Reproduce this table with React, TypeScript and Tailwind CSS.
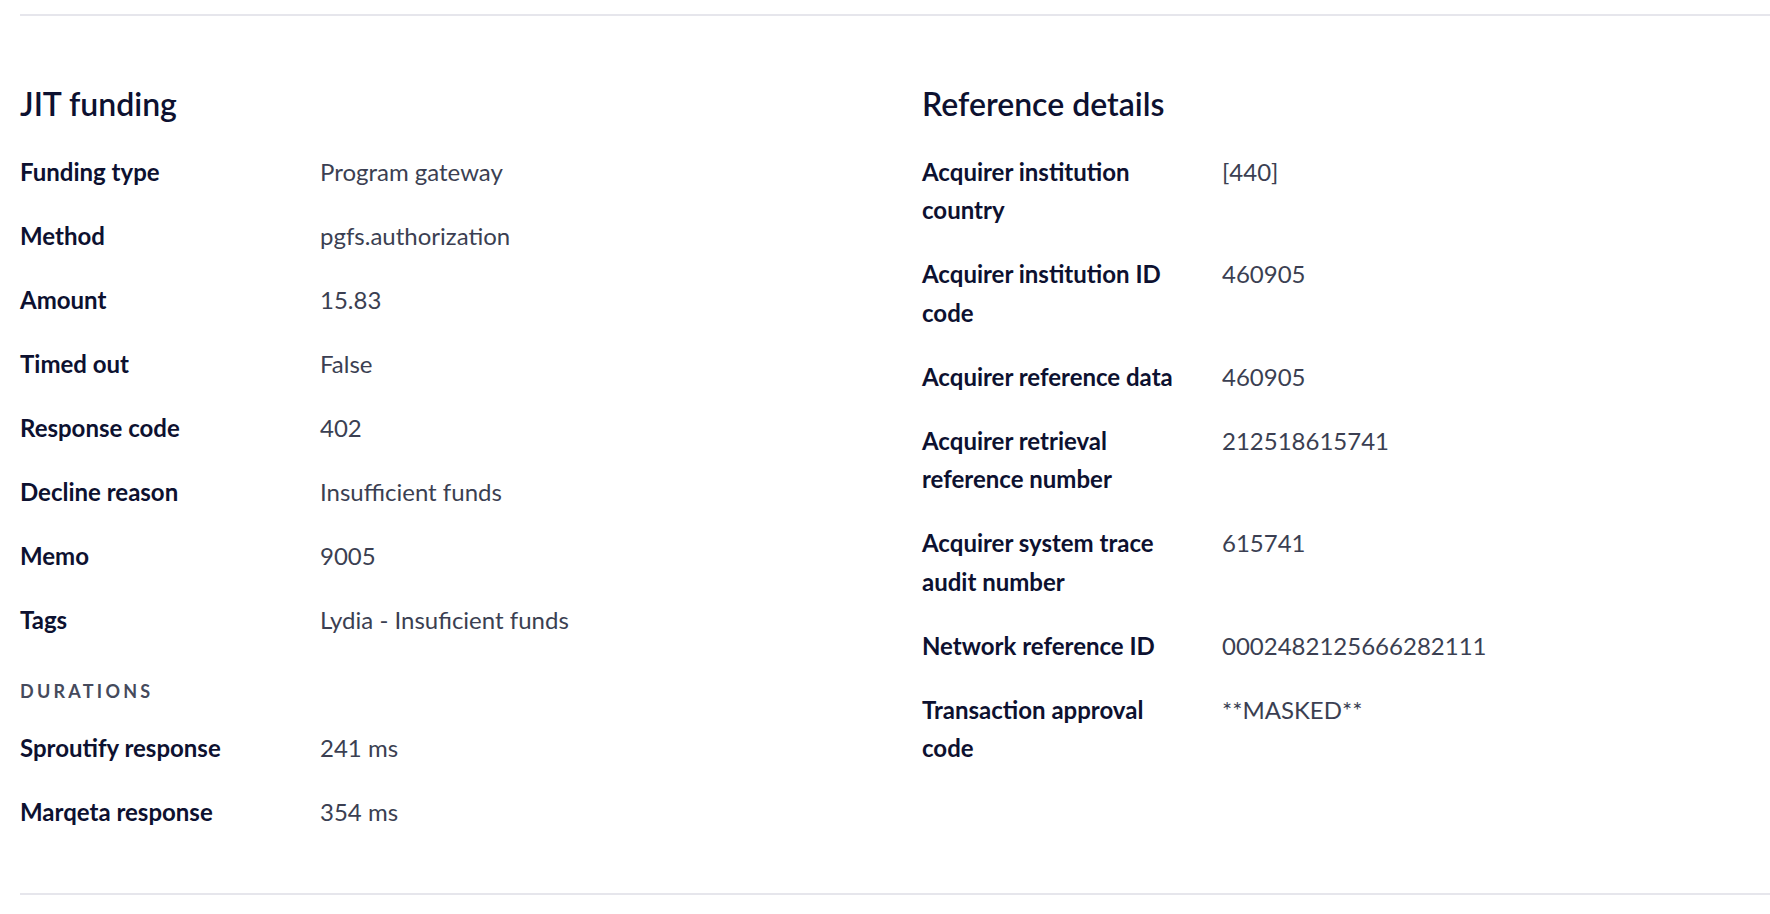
import React from 'react';

// ── Data ─────────────────────────────────────

type Row = { label: string; value: string };

const JIT_ROWS: Row[] = [
  { label: 'Funding type', value: 'Program gateway' },
  { label: 'Method', value: 'pgfs.authorization' },
  { label: 'Amount', value: '15.83' },
  { label: 'Timed out', value: 'False' },
  { label: 'Response code', value: '402' },
  { label: 'Decline reason', value: 'Insufficient funds' },
  { label: 'Memo', value: '9005' },
  { label: 'Tags', value: 'Lydia - Insuficient funds' },
];

const DURATION_ROWS: Row[] = [
  { label: 'Sproutify response', value: '241 ms' },
  { label: 'Marqeta response', value: '354 ms' },
];

const REF_ROWS: Row[] = [
  { label: 'Acquirer institution country', value: '[440]' },
  { label: 'Acquirer institution ID code', value: '460905' },
  { label: 'Acquirer reference data', value: '460905' },
  { label: 'Acquirer retrieval reference number', value: '212518615741' },
  { label: 'Acquirer system trace audit number', value: '615741' },
  { label: 'Network reference ID', value: '0002482125666282111' },
  { label: 'Transaction approval code', value: '**MASKED**' },
];

// ── Pieces ───────────────────────────────────

const DetailList = ({ rows }: { rows: Row[] }) => (
  <dl className="flex flex-col gap-[25.6px]">
    {rows.map((r) => (
      <div key={r.label} className="grid grid-cols-[300px_1fr] text-[24px] leading-[38.4px]">
        <dt className="pr-[28px] font-bold text-[#0d1130]">{r.label}</dt>
        <dd className="text-[#3b3f52]">{r.value}</dd>
      </div>
    ))}
  </dl>
);

const SectionTitle = ({ children }: { children: React.ReactNode }) => (
  <h2 className="mb-[29px] text-[32px] leading-[40px] font-semibold text-[#0d1130]">{children}</h2>
);

export default function App() {
  return (
    <div className="min-h-screen bg-white pl-5 pt-[14px]" style={{ fontFamily: 'Lato, "Open Sans", sans-serif' }}>
      <section className="border-y-2 border-[#e6e6ec] pt-[68px] pb-[61px]">
        <div className="grid grid-cols-[902px_1fr]">
          {/* ── JIT funding ── */}
          <div>
            <SectionTitle>JIT funding</SectionTitle>
            <DetailList rows={JIT_ROWS} />
            <div className="mt-[40px] mb-[26px] text-[18px] leading-[24px] font-bold uppercase tracking-[0.18em] text-[#454a5c]">
              Durations
            </div>
            <DetailList rows={DURATION_ROWS} />
          </div>

          {/* ── Reference details ── */}
          <div>
            <SectionTitle>Reference details</SectionTitle>
            <DetailList rows={REF_ROWS} />
          </div>
        </div>
      </section>
    </div>
  );
}
